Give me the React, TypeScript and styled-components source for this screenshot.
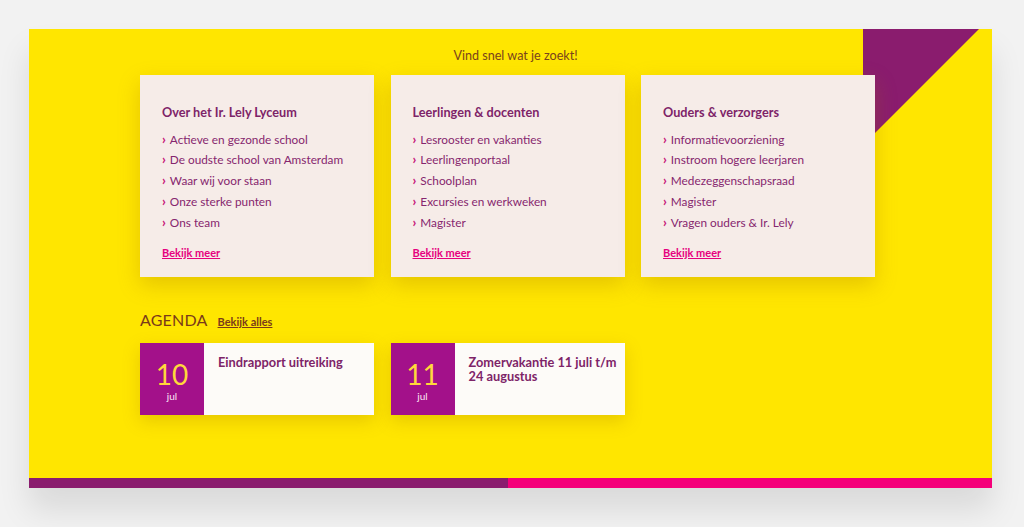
import styled, { createGlobalStyle } from 'styled-components';

const GlobalStyle = createGlobalStyle`
  html, body {
    margin: 0;
    padding: 0;
    background: #f2f2f2;
    font-family: Lato, 'Noto Sans', sans-serif;
  }
`;

const Page = styled.div`
  padding: 29px 32px 40px 29px;
`;

const Frame = styled.section`
  position: relative;
  width: 963px;
  background: #ffe600;
  box-shadow: 0 22px 30px rgba(0, 0, 0, 0.1);
`;

const Corner = styled.div`
  position: absolute;
  top: 0;
  right: 13px;
  width: 116px;
  height: 116px;
  background: #8a1c6e;
  clip-path: polygon(0 0, 100% 0, 0 100%);
`;

const Inner = styled.div`
  position: relative;
  padding: 19px 0 63px 111px;
`;

const Lead = styled.p`
  margin: 0 0 11px;
  width: 735px;
  padding-left: 8px;
  text-align: center;
  font-size: 12.6px;
  line-height: 16px;
  color: #7a441c;
`;

const Row = styled.div`
  display: grid;
  grid-template-columns: repeat(3, 234px);
  column-gap: 16.5px;
`;

const Card = styled.div`
  position: relative;
  height: 202px;
  box-sizing: border-box;
  padding: 29px 22px 16px;
  background: #f6ece8;
  box-shadow: 0 8px 20px rgba(160, 110, 0, 0.28);
`;

const CardTitle = styled.h3`
  margin: 0;
  font-size: 12.7px;
  line-height: 16px;
  font-weight: 700;
  color: #7e2468;
`;

const List = styled.ul`
  list-style: none;
  margin: 9.6px 0 0;
  padding: 0;
`;

const Item = styled.li`
  font-size: 11.8px;
  line-height: 20.75px;
  height: 20.75px;
  color: #86266e;
  white-space: nowrap;

  &::before {
    content: '›';
    display: inline-block;
    line-height: 10px;
    font-weight: 900;
    font-size: 13px;
    color: #c8177a;
    margin-right: 4px;
  }
`;

const More = styled.a`
  display: inline-block;
  margin-top: 11.6px;
  font-size: 11px;
  line-height: 16px;
  font-weight: 700;
  color: #e6007e;
  text-decoration: underline;
`;

const AgendaHead = styled.div`
  display: flex;
  align-items: baseline;
  gap: 10px;
  margin-top: 33px;
  height: 20px;
`;

const AgendaTitle = styled.h2`
  margin: 0;
  font-size: 16px;
  line-height: 20px;
  font-weight: 400;
  letter-spacing: 0.2px;
  color: #7a3a1a;
`;

const AllLink = styled.a`
  font-size: 11px;
  font-weight: 700;
  color: #7a3a1a;
  text-decoration: underline;
`;

const Events = styled.div`
  display: grid;
  grid-template-columns: repeat(2, 234px);
  column-gap: 16.5px;
  margin-top: 13px;
`;

const Event = styled.div`
  display: flex;
  height: 72px;
  background: #fdfbf8;
  box-shadow: 0 6px 16px rgba(160, 110, 0, 0.25);
`;

const DateBox = styled.div`
  flex: 0 0 64px;
  display: flex;
  flex-direction: column;
  align-items: center;
  justify-content: center;
  background: #a3118a;
  padding-top: 4px;
`;

const Day = styled.span`
  font-size: 28px;
  line-height: 30px;
  color: #ffd83a;
`;

const Month = styled.span`
  font-size: 10px;
  line-height: 14px;
  color: #fbe9f4;
`;

const EventTitle = styled.div`
  flex: 1;
  min-width: 0;
  padding: 12px 8px 0 14px;
  font-size: 12.8px;
  line-height: 14px;
  font-weight: 700;
  color: #7e2468;
`;

const Bar = styled.div`
  display: flex;
  height: 10px;
`;

const BarPart = styled.div<{ $color: string; $width?: string }>`
  background: ${(p) => p.$color};
  flex: ${(p) => (p.$width ? `0 0 ${p.$width}` : '1')};
`;

const columns = [
  {
    title: 'Over het Ir. Lely Lyceum',
    items: [
      'Actieve en gezonde school',
      'De oudste school van Amsterdam',
      'Waar wij voor staan',
      'Onze sterke punten',
      'Ons team',
    ],
  },
  {
    title: 'Leerlingen & docenten',
    items: [
      'Lesrooster en vakanties',
      'Leerlingenportaal',
      'Schoolplan',
      'Excursies en werkweken',
      'Magister',
    ],
  },
  {
    title: 'Ouders & verzorgers',
    items: [
      'Informatievoorziening',
      'Instroom hogere leerjaren',
      'Medezeggenschapsraad',
      'Magister',
      'Vragen ouders & Ir. Lely',
    ],
  },
];

const events = [
  { day: '10', month: 'jul', title: 'Eindrapport uitreiking' },
  { day: '11', month: 'jul', title: 'Zomervakantie 11 juli t/m 24 augustus' },
];

const App = () => (
  <Page>
    <GlobalStyle />
    <Frame>
      <Corner />
      <Inner>
        <Lead>Vind snel wat je zoekt!</Lead>
        <Row>
          {columns.map((col) => (
            <Card key={col.title}>
              <CardTitle>{col.title}</CardTitle>
              <List>
                {col.items.map((item) => (
                  <Item key={item}>{item}</Item>
                ))}
              </List>
              <More href="#">Bekijk meer</More>
            </Card>
          ))}
        </Row>
        <AgendaHead>
          <AgendaTitle>AGENDA</AgendaTitle>
          <AllLink href="#">Bekijk alles</AllLink>
        </AgendaHead>
        <Events>
          {events.map((ev) => (
            <Event key={ev.title}>
              <DateBox>
                <Day>{ev.day}</Day>
                <Month>{ev.month}</Month>
              </DateBox>
              <EventTitle>{ev.title}</EventTitle>
            </Event>
          ))}
        </Events>
      </Inner>
      <Bar>
        <BarPart $color="#8a1c6e" $width="479px" />
        <BarPart $color="#f5007a" />
      </Bar>
    </Frame>
  </Page>
);

export default App;
